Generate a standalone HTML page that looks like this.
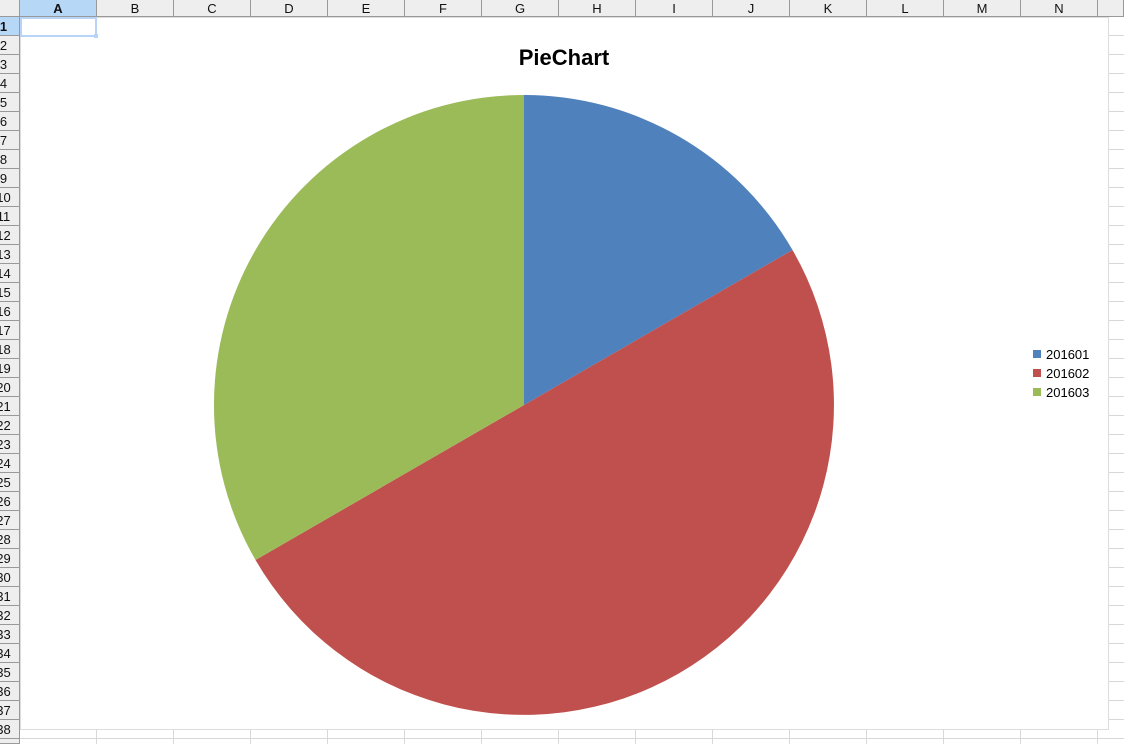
<!DOCTYPE html>
<html><head><meta charset="utf-8"><style>
*{margin:0;padding:0;box-sizing:border-box}
html,body{width:1124px;height:744px;overflow:hidden}
body{background:#fff;position:relative;font-family:"Liberation Sans",sans-serif}
.ch{position:absolute;top:0;height:17px;background:#eeeeee;border-right:1px solid #999;border-bottom:1px solid #999;font-size:13px;text-align:center;line-height:17px;color:#111}
.rh{position:absolute;left:0;width:20px;height:19px;background:#eeeeee;border-right:1px solid #999;border-bottom:1px solid #999;font-size:13px;line-height:19px;color:#111;overflow:hidden}
.rh span{position:absolute;left:3.5px;transform:translateX(-50%);white-space:nowrap}
.vl{position:absolute;top:17px;bottom:0;width:1px;background:#d8d8d8}
.hl{position:absolute;left:20px;right:0;height:1px;background:#d8d8d8}
</style></head><body>
<div id="grid"></div>
<div style="position:absolute;left:20px;top:17px;width:1089px;height:713px;background:#fff;border:1px solid #ddd"></div>
<div style="position:absolute;left:20px;top:17px;width:77px;height:20px;border:2px solid #b7d3f5"></div>
<div style="position:absolute;left:94px;top:34px;width:4px;height:4px;background:#b7d3f5"></div>
<svg style="position:absolute;left:0;top:0" width="1124" height="744">
<path d="M524 405 L524 95 A310 310 0 0 1 792.5 250 Z" fill="#4f81bd"/>
<path d="M524 405 L792.5 250 A310 310 0 0 1 255.5 560 Z" fill="#c0504d"/>
<path d="M524 405 L255.5 560 A310 310 0 0 1 524 95 Z" fill="#9bbb59"/>
<text x="564" y="65" font-family="Liberation Sans, sans-serif" font-weight="bold" font-size="22" text-anchor="middle" fill="#000">PieChart</text>
<rect x="1033" y="350" width="8" height="8" fill="#4f81bd"/>
<rect x="1033" y="369" width="8" height="8" fill="#c0504d"/>
<rect x="1033" y="388" width="8" height="8" fill="#9bbb59"/>
<g font-family="Liberation Sans, sans-serif" font-size="13" fill="#000">
<text x="1046" y="359">201601</text><text x="1046" y="378">201602</text><text x="1046" y="397">201603</text>
</g>
</svg>
<script>
var g=document.getElementById('grid'),h='';
var cols='ABCDEFGHIJKLMN'.split('');
for(var i=0;i<15;i++){var x=20+i*77;h+='<div class="vl" style="left:'+(x+76)+'px"></div>';
if(i<14)h+='<div class="ch" style="left:'+x+'px;width:77px;'+(i==0?'background:#b7d7f7;font-weight:bold':'')+'">'+cols[i]+'</div>';
else h+='<div class="ch" style="left:'+x+'px;width:26px"></div>';}
h+='<div class="ch" style="left:0;width:20px"></div>';
for(var r=1;r<=38;r++){var y=17+(r-1)*19;h+='<div class="hl" style="top:'+(y+18)+'px"></div>';
h+='<div class="rh" style="top:'+y+'px;'+(r==1?'background:#b7d7f7;font-weight:bold':'')+'"><span>'+r+'</span></div>';}
h+='<div class="rh" style="top:739px;height:5px"></div>';
g.innerHTML=h;
</script>
</body></html>
